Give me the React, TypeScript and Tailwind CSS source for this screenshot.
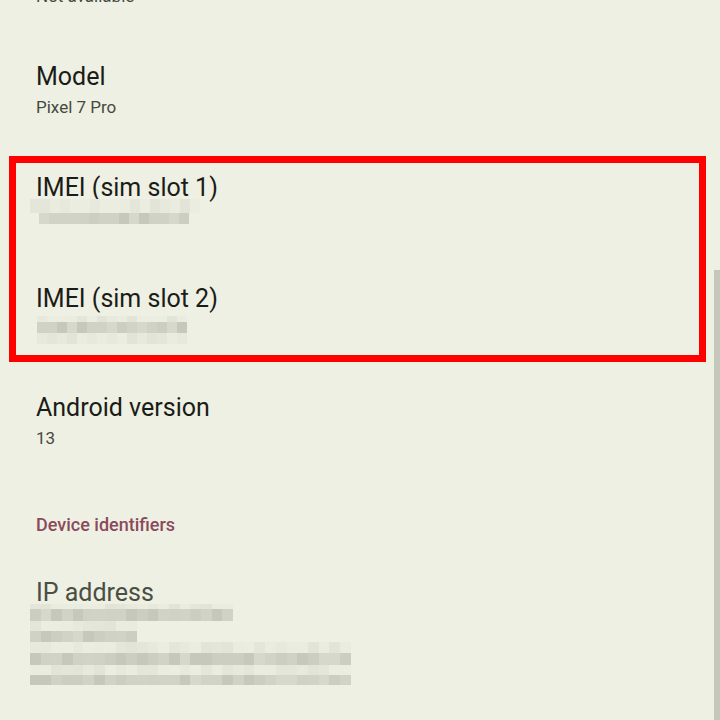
import React from "react";

// stable pseudo-random for the redaction mosaic
function seededRand(seed: number): number {
  const x = Math.sin(seed) * 10000;
  return x - Math.floor(x);
}

const DARK = ["#c5c8ba", "#cbcec0", "#d0d3c5", "#d5d8cb", "#cfd2c4"];
const LIGHT = ["#e3e6d9", "#e6e9dc", "#e9ecdf", "#e1e4d6", "#eaede0"];

type Row = { width: number; h: number; dark: boolean; inset?: number };

function Mosaic({ rows, cell, seed }: { rows: Row[]; cell: number; seed: number }) {
  return (
    <div className="flex flex-col">
      {rows.map((row, r) => {
        const count = Math.ceil(row.width / cell);
        const pal = row.dark ? DARK : LIGHT;
        return (
          <div key={r} className="flex" style={{ height: row.h, paddingLeft: row.inset ?? 0 }}>
            {Array.from({ length: count }).map((_, c) => {
              const v = seededRand(seed + r * 31 + c * 7);
              return (
                <div
                  key={c}
                  className="h-full shrink-0"
                  style={{ width: cell, background: pal[Math.floor(v * pal.length)] }}
                />
              );
            })}
          </div>
        );
      })}
    </div>
  );
}

function Title({ children, muted }: { children: React.ReactNode; muted?: boolean }) {
  return (
    <p className={`text-[25px] leading-[32px] ${muted ? "text-[#4a4e43]" : "text-[#1b1c17]"}`}>
      {children}
    </p>
  );
}

function Summary({ children }: { children: React.ReactNode }) {
  return <p className="text-[17px] leading-[28px] text-[#46493f]">{children}</p>;
}

export default function App() {
  return (
    <div className="relative h-[720px] w-[720px] overflow-hidden bg-[#eef0e4] font-['Roboto',sans-serif]">
      <div className="-mt-[76px] flex flex-col">
        {/* previous row, scrolled mostly out of view */}
        <div className="h-[111px] px-9 pt-[26px]">
          <Title>Phone number</Title>
          <Summary>Not available</Summary>
        </div>

        <div className="h-[111px] px-9 pt-[26px]">
          <Title>Model</Title>
          <Summary>Pixel 7 Pro</Summary>
        </div>

        {/* highlighted IMEI rows */}
        <div className="relative">
          <div className="h-[111px] pt-[26px]">
            <div className="px-9">
              <Title>IMEI (sim slot 1)</Title>
            </div>
            <div className="-mt-[5px] pl-[30px]">
              <Mosaic
                seed={11}
                cell={10}
                rows={[
                  { width: 162, h: 14, dark: false },
                  { width: 150, h: 11, dark: true, inset: 9 },
                ]}
              />
            </div>
          </div>
          <div className="h-[109px] pt-[26px]">
            <div className="px-9">
              <Title>IMEI (sim slot 2)</Title>
            </div>
            <div className="mt-[1px] pl-[37px]">
              <Mosaic
                seed={53}
                cell={10}
                rows={[
                  { width: 150, h: 6, dark: false },
                  { width: 150, h: 11, dark: true },
                  { width: 150, h: 11, dark: false },
                ]}
              />
            </div>
          </div>
          <div className="pointer-events-none absolute top-[10px] right-[14px] bottom-[4px] left-[9px] border-[7px] border-[#ff0000]" />
        </div>

        <div className="h-[111px] px-9 pt-[26px]">
          <Title>Android version</Title>
          <Summary>13</Summary>
        </div>

        <div className="px-9 pt-[36px] pb-[16px]">
          <p className="text-[18px] leading-[24px] font-medium text-[#8b4a5b]">Device identifiers</p>
        </div>

        <div className="pt-[24px]">
          <div className="px-9">
            <Title muted>IP address</Title>
          </div>
          <div className="-mt-[5px] pl-[30px]">
            <Mosaic
              seed={97}
              cell={10.7}
              rows={[
                { width: 202, h: 5, dark: false },
                { width: 202, h: 12, dark: true },
                { width: 106, h: 10, dark: false },
                { width: 106, h: 11, dark: true },
                { width: 318, h: 11, dark: false },
                { width: 318, h: 12, dark: true },
                { width: 318, h: 10, dark: false },
                { width: 318, h: 10, dark: true },
              ]}
            />
          </div>
        </div>
      </div>

      {/* scrollbar thumb */}
      <div className="absolute top-[270px] right-0 h-[450px] w-[6px] bg-[#c5c7ba]" />
    </div>
  );
}
